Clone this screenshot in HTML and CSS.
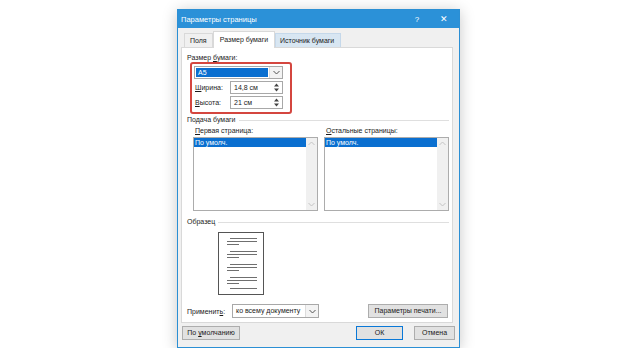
FILE: index.html
```html
<!DOCTYPE html>
<html lang="ru">
<head>
  <meta charset="UTF-8">
  <title>Параметры страницы</title>
  <link rel="stylesheet" href="styles.css">
</head>
<body>
  <div class="dialog">
    <!-- Title bar -->
    <div class="titlebar">
      <span class="title">Параметры страницы</span>
      <span class="tb-btn">?</span>
      <span class="tb-btn close">✕</span>
    </div>

    <!-- Tabs -->
    <div class="tabs">
      <span class="tab">Поля</span>
      <span class="tab active">Размер бумаги</span>
      <span class="tab hover">Источник бумаги</span>
    </div>

    <div class="panel">
      <div class="label">Размер <u>б</u>умаги:</div>

      <div class="highlight">
        <div class="select">
          <span class="select-value">A5</span>
          <span class="select-btn">
            <svg width="7" height="5" viewBox="0 0 7 5"><path d="M0.5 1 L3.5 4 L6.5 1" fill="none" stroke="#555" stroke-width="1"/></svg>
          </span>
        </div>
        <div class="field-row">
          <span class="field-label"><u>Ш</u>ирина:</span>
          <div class="spin">
            <span class="spin-value">14,8 см</span>
            <span class="spin-btns">
              <svg width="5" height="9" viewBox="0 0 5 9"><path d="M2.5 0.5 L5 3.5 L0 3.5 Z M0 5.5 L5 5.5 L2.5 8.5 Z" fill="#444"/></svg>
            </span>
          </div>
        </div>
        <div class="field-row">
          <span class="field-label"><u>В</u>ысота:</span>
          <div class="spin">
            <span class="spin-value">21 см</span>
            <span class="spin-btns">
              <svg width="5" height="9" viewBox="0 0 5 9"><path d="M2.5 0.5 L5 3.5 L0 3.5 Z M0 5.5 L5 5.5 L2.5 8.5 Z" fill="#444"/></svg>
            </span>
          </div>
        </div>
      </div>

      <div class="group-head"><span>Подача бумаги</span></div>

      <div class="lists">
        <div class="list-col">
          <div class="list-label"><u>П</u>ервая страница:</div>
          <div class="listbox">
            <div class="list-items"><div class="list-item">По умолч.</div></div>
            <div class="scroll">
              <svg width="7" height="5" viewBox="0 0 7 5"><path d="M0.5 4 L3.5 1 L6.5 4" fill="none" stroke="#c4c4c4"/></svg>
              <svg width="7" height="5" viewBox="0 0 7 5"><path d="M0.5 1 L3.5 4 L6.5 1" fill="none" stroke="#c4c4c4"/></svg>
            </div>
          </div>
        </div>
        <div class="list-col">
          <div class="list-label"><u>О</u>стальные страницы:</div>
          <div class="listbox">
            <div class="list-items"><div class="list-item">По умолч.</div></div>
            <div class="scroll">
              <svg width="7" height="5" viewBox="0 0 7 5"><path d="M0.5 4 L3.5 1 L6.5 4" fill="none" stroke="#c4c4c4"/></svg>
              <svg width="7" height="5" viewBox="0 0 7 5"><path d="M0.5 1 L3.5 4 L6.5 1" fill="none" stroke="#c4c4c4"/></svg>
            </div>
          </div>
        </div>
      </div>

      <div class="group-head sample"><span>Образец</span></div>

      <div class="preview">
        <svg width="46" height="63" viewBox="0 0 46 63">
          <rect x="0.5" y="0.5" width="45" height="62" fill="#fff" stroke="#555"/>
          <g stroke="#6f6f6f" stroke-width="1">
            <path d="M12 6.5 H39 M9 9.5 H39 M9 12.5 H21"/>
            <path d="M12 19.5 H39 M9 22.5 H39 M9 25.5 H21"/>
            <path d="M12 32.5 H39 M9 35.5 H39 M9 38.5 H21"/>
            <path d="M12 45.5 H39 M9 48.5 H39 M9 51.5 H21"/>
            <path d="M12 56.5 H39"/>
          </g>
        </svg>
      </div>

      <div class="apply-row">
        <span class="apply-label">Применит<u>ь</u>:</span>
        <div class="combo">
          <span class="combo-value">ко всему документу</span>
          <span class="combo-btn">
            <svg width="7" height="5" viewBox="0 0 7 5"><path d="M0.5 1 L3.5 4 L6.5 1" fill="none" stroke="#555" stroke-width="1"/></svg>
          </span>
        </div>
        <button class="btn print-btn">Параметры печати...</button>
      </div>
    </div>

    <!-- Footer buttons -->
    <div class="footer">
      <button class="btn">По <u>у</u>молчанию</button>
      <span class="spacer"></span>
      <button class="btn ok">ОК</button>
      <button class="btn">Отмена</button>
    </div>
  </div>
</body>
</html>
```

FILE: styles.css
```css
/* Base */
body {
  margin: 0;
  background: #fff;
  font-family: "Liberation Sans", Arial, sans-serif;
  font-size: 7px;
  color: #1a1a1a;
}
u {
  text-decoration-thickness: 1px;
  text-underline-offset: 1px;
}

/* Dialog frame */
.dialog {
  width: 281px;
  margin: 9px 0 0 177px;
  border: 1px solid #2b8fd4;
  background: #f0f0f0;
  box-shadow: 0 2px 14px rgba(0,0,0,0.22);
}
.titlebar {
  height: 18px;
  background: #2b91d8;
  color: #fff;
  display: flex;
  align-items: center;
  padding-left: 3px;
}
.titlebar .title {
  flex: 1;
  font-size: 7.5px;
}
.tb-btn {
  width: 22px;
  margin-right: 5px;
  text-align: center;
  font-size: 8px;
}
.tb-btn.close {
  font-size: 9px;
  margin-right: 4px;
}

/* Tabs */
.tabs {
  display: flex;
  align-items: flex-end;
  height: 18px;
  padding-left: 6px;
  margin-top: 1px;
}
.tab {
  height: 14px;
  line-height: 13px;
  padding: 0 5px;
  border: 1px solid #d9d9d9;
  border-bottom: none;
  background: #f0f0f0;
  box-sizing: border-box;
  white-space: nowrap;
}
.tab:first-child {
  padding: 0 5px;
  width: 29px;
}
.tab.active {
  height: 17px;
  line-height: 16px;
  background: #fff;
  border-color: #d9d9d9;
  width: 62px;
  text-align: center;
  padding: 0;
  position: relative;
  top: 1px;
}
.tab.hover {
  background: #d8e6f2;
  border-color: #c5d8ea;
  width: 66px;
  padding: 0 0 0 4px;
}

/* Content panel */
.panel {
  margin: 0 6px 0 3px;
  background: #fff;
  border: 1px solid #d9d9d9;
  padding: 5px 3px 6px 5px;
  height: 263px;
}
.label {
  line-height: 9px;
}

/* Red annotation frame */
.highlight {
  width: 96px;
  height: 46px;
  margin: 0 0 0 3px;
  border: 2px solid #d4463f;
  border-radius: 3px;
  padding: 2px 0 0 2px;
  box-sizing: content-box;
}
.select {
  width: 89px;
  height: 13px;
  border: 1px solid #a8a8a8;
  box-sizing: border-box;
  display: flex;
}
.select-value {
  flex: 1;
  margin: 1px;
  background: #0a6fd0;
  color: #fff;
  line-height: 9px;
  padding-left: 2px;
}
.select-btn {
  width: 12px;
  display: flex;
  align-items: center;
  justify-content: center;
  border-left: 1px solid #dcdcdc;
  background: #f3f3f3;
}
.field-row {
  display: flex;
  align-items: center;
  margin-top: 2px;
}
.field-label {
  width: 35px;
  padding-left: 1px;
}
.spin {
  width: 53px;
  height: 13px;
  border: 1px solid #a8a8a8;
  box-sizing: border-box;
  display: flex;
  background: #fff;
}
.spin-value {
  flex: 1;
  line-height: 11px;
  padding-left: 3px;
}
.spin-btns {
  width: 12px;
  display: flex;
  align-items: center;
  justify-content: center;
  background: #fff;
}

/* Group headers with rule */
.group-head {
  display: flex;
  align-items: center;
  line-height: 10px;
  margin-top: 1px;
}
.group-head::after {
  content: "";
  flex: 1;
  height: 1px;
  background: #dfdfdf;
  margin-left: 3px;
}
.group-head.sample {
  margin-top: 6px;
}

/* Paper source lists */
.lists {
  display: grid;
  grid-template-columns: 125px 125px;
  column-gap: 6px;
  margin-left: 6px;
  margin-top: 1px;
}
.list-label {
  line-height: 10px;
  padding-left: 2px;
  margin-bottom: 1px;
}
.listbox {
  height: 74px;
  border: 1px solid #acacac;
  box-sizing: border-box;
  display: flex;
}
.list-items {
  flex: 1;
}
.list-item {
  background: #0a6fd0;
  color: #fff;
  line-height: 9px;
  padding-left: 1px;
}
.scroll {
  width: 11px;
  background: #f0f0f0;
  display: flex;
  flex-direction: column;
  justify-content: space-between;
  align-items: center;
  padding: 3px 0;
}

/* Sample preview */
.preview {
  margin: 5px 0 0 31px;
  height: 63px;
}
.preview svg {
  display: block;
}

/* Apply row */
.apply-row {
  display: flex;
  align-items: center;
  margin-top: 9px;
}
.apply-label {
  width: 45px;
}
.combo {
  width: 87px;
  height: 14px;
  border: 1px solid #a8a8a8;
  box-sizing: border-box;
  display: flex;
  background: #fff;
}
.combo-value {
  flex: 1;
  line-height: 12px;
  padding-left: 3px;
  white-space: nowrap;
}
.combo-btn {
  width: 12px;
  display: flex;
  align-items: center;
  justify-content: center;
  border-left: 1px solid #dcdcdc;
  background: #f3f3f3;
}

/* Buttons */
.btn {
  font: inherit;
  color: #1a1a1a;
  height: 14px;
  padding: 0 4px;
  line-height: 12px;
  background: #e1e1e1;
  border: 1px solid #adadad;
  white-space: nowrap;
}
.print-btn {
  margin-left: auto;
  margin-right: 1px;
  width: 80px;
}
.footer {
  display: flex;
  align-items: center;
  padding: 3px 4px 7px 4px;
}
.footer .btn {
  width: 58px;
}
.footer .btn.ok {
  width: 47px;
  border: 1px solid #0a78d7;
  margin-right: 11px;
}
.footer .btn:last-child {
  width: 41px;
}
.spacer {
  flex: 1;
}
```
